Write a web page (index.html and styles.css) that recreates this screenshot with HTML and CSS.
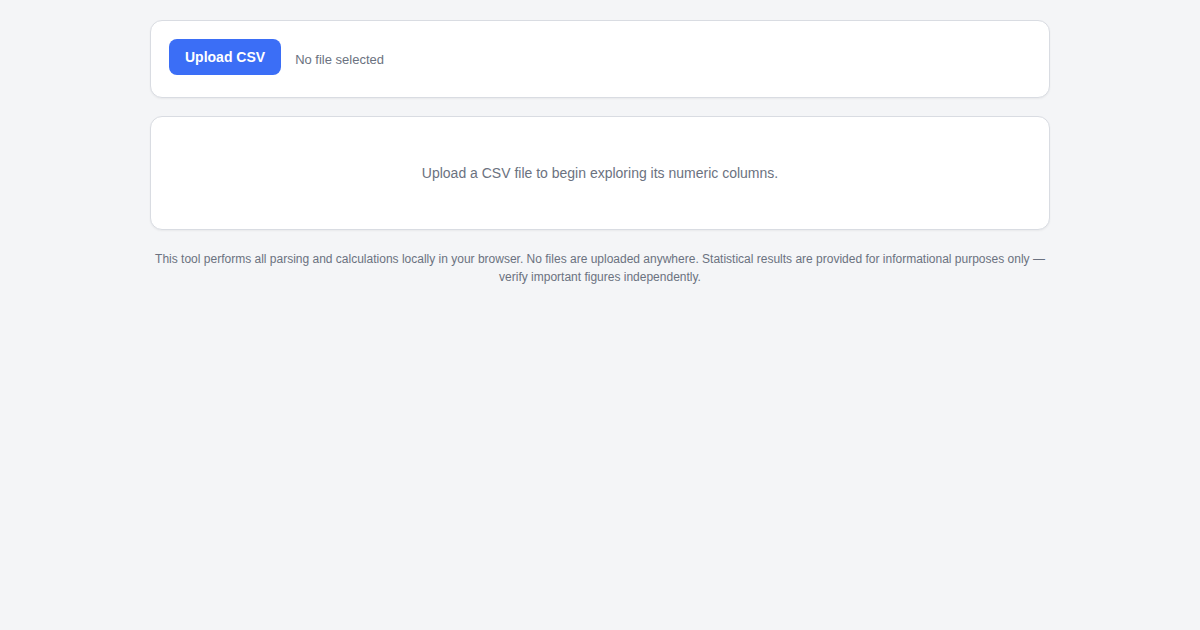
FILE: index.html
```html
<!DOCTYPE html>
<html lang="en">
<head>
<meta charset="utf-8">
<title>CSV Explorer</title>
<link rel="stylesheet" href="styles.css">
</head>
<body>
<main class="container">
  <section class="card upload-card">
    <button class="btn" type="button">Upload CSV</button>
    <span class="file-name">No file selected</span>
  </section>
  <section class="card empty-card">
    <p class="empty-text">Upload a CSV file to begin exploring its numeric columns.</p>
  </section>
  <p class="disclaimer">This tool performs all parsing and calculations locally in your browser. No files are uploaded anywhere. Statistical results are provided for informational purposes only — verify important figures independently.</p>
</main>
</body>
</html>
```

FILE: styles.css
```css
* { box-sizing: border-box; }
html, body { margin: 0; padding: 0; }
body {
  background: #f4f5f7;
  font-family: "Liberation Sans", Arial, Helvetica, sans-serif;
  color: #374151;
}
.container {
  width: 900px;
  margin: 20px auto 0;
  display: flex;
  flex-direction: column;
  gap: 18px;
}
.card {
  background: #ffffff;
  border: 1px solid #d9dce2;
  border-radius: 12px;
  box-shadow: 0 1px 2px rgba(0,0,0,0.05);
}
.upload-card {
  display: flex;
  align-items: flex-start;
  gap: 14px;
  padding: 18px 18px;
  height: 78px;
}
.btn {
  background: #3b6ef6;
  color: #ffffff;
  border: none;
  border-radius: 8px;
  font-family: inherit;
  font-size: 14px;
  font-weight: 700;
  height: 36px;
  padding: 0 16px;
  cursor: pointer;
}
.file-name {
  align-self: center;
  font-size: 13px;
  color: #6b7280;
}
.empty-card {
  height: 114px;
  display: flex;
  align-items: center;
  justify-content: center;
}
.empty-text {
  margin: 0;
  font-size: 14px;
  color: #6b7280;
}
.disclaimer {
  margin: 2px 0 0;
  font-size: 12px;
  line-height: 18px;
  color: #6b7280;
  text-align: center;
  padding: 0 4px;
}
```
